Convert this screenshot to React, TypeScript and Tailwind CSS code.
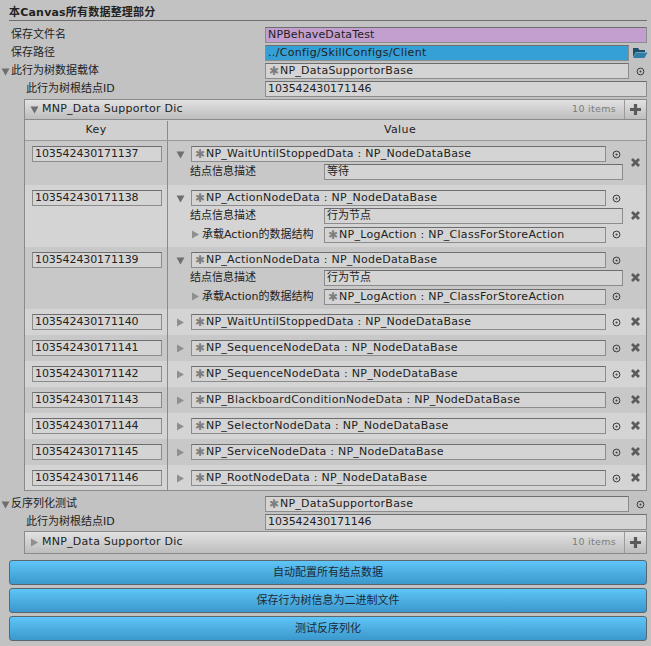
import React from "react";

const FONT = { fontFamily: '"DejaVu Sans", "Noto Sans CJK SC", sans-serif' };

function Circle({ className = "" }: { className?: string }) {
  return (
    <svg width="9" height="9" viewBox="0 0 9 9" className={`shrink-0 ${className}`}>
      <circle cx="4.5" cy="4.5" r="3.4" fill="none" stroke="#3a3a3a" strokeWidth="1" />
      <circle cx="4.5" cy="4.5" r="1" fill="#3a3a3a" />
    </svg>
  );
}

function Cross() {
  return (
    <svg width="11" height="11" viewBox="0 0 11 11">
      <path d="M2 2 L9 9 M9 2 L2 9" stroke="#5c5c5c" strokeWidth="2.8" />
    </svg>
  );
}

function Arrow({ open, light }: { open?: boolean; light?: boolean }) {
  const fill = light ? "#8f8f8f" : "#6f6f6f";
  return (
    <svg width="9" height="9" viewBox="0 0 9 9" className="shrink-0">
      {open ? <path d="M0.5 1.5 H8.5 L4.5 8.5 Z" fill={fill} /> : <path d="M1 0.5 V8.5 L8 4.5 Z" fill={fill} />}
    </svg>
  );
}

function Field({ text, star, className = "" }: { text: string; star?: boolean; className?: string }) {
  return (
    <div
      className={`flex h-[16px] shrink-0 items-center overflow-hidden whitespace-nowrap border border-[#8c8c8c] border-t-[#6e6e6e] pl-[2px] text-[11px] text-[#222222] ${className}`}
    >
      {star && <span className="w-[12px] shrink-0 text-center text-[12px] leading-none tracking-normal text-[#7d7d7d]">✱</span>}
      {text}
    </div>
  );
}

function PropRow({
  label,
  value,
  star,
  arrow,
  indent,
  picker,
}: {
  label: string;
  value: string;
  star?: boolean;
  arrow?: boolean;
  indent?: boolean;
  picker?: boolean;
}) {
  return (
    <div className="flex h-[18px] items-center">
      <div className={`flex w-[265px] shrink-0 items-center text-[11px] text-[#222222] ${indent ? "pl-[26px]" : "pl-[1px]"}`}>
        {arrow && <Arrow open />}
        <span className={arrow ? "ml-[1px]" : indent ? "" : "pl-[10px]"}>{label}</span>
      </div>
      <Field
        text={value}
        star={star}
        className={`bg-[#d4d4d4] ${picker ? "w-[364px]" : "w-[382px]"} ${star ? "tracking-[0.25px]" : "tracking-[-0.1px]"}`}
      />
      {picker && <Circle className="ml-[7px]" />}
    </div>
  );
}

function ListHeader({ open, className = "" }: { open?: boolean; className?: string }) {
  return (
    <div
      className={`ml-[24px] mr-[4px] flex items-center border border-[#8a8a8a] bg-gradient-to-b from-[#e2e2e2] to-[#bdbdbd] pl-[5px] text-[11px] tracking-[0.25px] text-[#222222] ${className}`}
    >
      <Arrow open={open} light={!open} />
      <span className="ml-[3px]">MNP_Data Supportor Dic</span>
      <span className="ml-auto text-[9.5px] tracking-[0.3px] text-[#7c7c7c]">10 items</span>
      <div className="ml-[8px] flex h-full w-[22px] items-center justify-center border-l border-[#9a9a9a]">
        <svg width="13" height="13" viewBox="0 0 13 13">
          <path d="M6.5 1 V12 M1 6.5 H12" stroke="#5a5a5a" strokeWidth="3.2" />
        </svg>
      </div>
    </div>
  );
}

function TableRow({ id, node, desc, h, dark }: { id: string; node: string; desc?: string; h: number; dark?: boolean }) {
  const open = h > 26;
  const hasAction = h > 44;
  return (
    <div className={`flex ${dark ? "bg-[#c8c8c8]" : "bg-[#d4d4d4]"}`} style={{ height: h }}>
      <div className="w-[143px] shrink-0 border-r border-[#8a8a8a] pl-[7px] pt-[5px]">
        <Field text={id} className="w-[130px] bg-[#d4d4d4] tracking-[-0.1px]" />
      </div>
      <div className={`flex flex-1 ${open ? "items-center" : "items-start"}`}>
        <div className="w-[456px] shrink-0 self-start pt-[5px]">
          <div className="flex items-center pl-[8px]">
            <Arrow open={open} light={!open} />
            <Field text={node} star className="ml-[6px] w-[415px] bg-[#d4d4d4] tracking-[0.25px]" />
            <Circle className="ml-[6px]" />
          </div>
          {open && (
            <div className="mt-[2px] flex items-center pl-[22px] text-[11px] text-[#222222]">
              <span className="w-[134px] shrink-0">结点信息描述</span>
              <Field text={desc ?? ""} className="w-[299px] bg-[#d4d4d4]" />
            </div>
          )}
          {hasAction && (
            <div className="mt-[2px] flex items-center pl-[23px] text-[11px] text-[#222222]">
              <Arrow light />
              <span className="ml-[2px] w-[122px] shrink-0">承载Action的数据结构</span>
              <Field text="NP_LogAction : NP_ClassForStoreAction" star className="w-[282px] bg-[#d4d4d4] tracking-[0.28px]" />
              <Circle className="ml-[6px]" />
            </div>
          )}
        </div>
        <div className={`flex flex-1 justify-center ${open ? "pb-[2px]" : "self-start pt-[7px]"}`}>
          <Cross />
        </div>
      </div>
    </div>
  );
}

const rows = [
  { id: "103542430171137", node: "NP_WaitUntilStoppedData : NP_NodeDataBase", desc: "等待", h: 44, dark: true },
  { id: "103542430171138", node: "NP_ActionNodeData : NP_NodeDataBase", desc: "行为节点", h: 62 },
  { id: "103542430171139", node: "NP_ActionNodeData : NP_NodeDataBase", desc: "行为节点", h: 62, dark: true },
  { id: "103542430171140", node: "NP_WaitUntilStoppedData : NP_NodeDataBase", h: 26 },
  { id: "103542430171141", node: "NP_SequenceNodeData : NP_NodeDataBase", h: 26, dark: true },
  { id: "103542430171142", node: "NP_SequenceNodeData : NP_NodeDataBase", h: 26 },
  { id: "103542430171143", node: "NP_BlackboardConditionNodeData : NP_NodeDataBase", h: 26, dark: true },
  { id: "103542430171144", node: "NP_SelectorNodeData : NP_NodeDataBase", h: 26 },
  { id: "103542430171145", node: "NP_ServiceNodeData : NP_NodeDataBase", h: 26, dark: true },
  { id: "103542430171146", node: "NP_RootNodeData : NP_NodeDataBase", h: 25 },
];

const buttons = ["自动配置所有结点数据", "保存行为树信息为二进制文件", "测试反序列化"];

export default function App() {
  return (
    <div className="h-[646px] w-[651px] overflow-hidden bg-[#c2c2c2]" style={FONT}>
      <div className="ml-[9px] mr-[4px] h-[21px] border-b border-[#6f6f6f] pt-[6px] text-[11px] font-bold leading-[14px] tracking-[0.2px] text-[#222222]">
        本Canvas所有数据整理部分
      </div>

      <div className="mt-[5px]">
        <div className="flex h-[18px] items-center">
          <div className="w-[265px] shrink-0 pl-[11px] text-[11px] text-[#222222]">保存文件名</div>
          <Field text="NPBehaveDataTest" className="w-[382px] bg-[#c29fcf] tracking-[0.15px]" />
        </div>
        <div className="flex h-[18px] items-center">
          <div className="w-[265px] shrink-0 pl-[11px] text-[11px] text-[#222222]">保存路径</div>
          <Field text="../Config/SkillConfigs/Client" className="w-[364px] bg-[#35a0d6] tracking-[0.34px]" />
          <svg width="16" height="12" viewBox="0 0 16 12" className="ml-[3px]">
            <path d="M1 1 H6 L7.5 3 H13 V5 H4 L1 10 Z" fill="#1f4f6e" />
            <path d="M4 5.5 H15.5 L12.5 11 H1 Z" fill="#2f7ea8" />
          </svg>
        </div>
        <PropRow label="此行为树数据载体" value="NP_DataSupportorBase" star arrow picker />
        <PropRow label="此行为树根结点ID" value="103542430171146" indent />
      </div>

      <ListHeader open className="mt-[1px] h-[21px]" />

      <div className="ml-[24px] mr-[4px] border-x border-b border-[#8a8a8a]">
        <div className="flex h-[21px] border-b border-[#9a9a9a] bg-[#d0d0d0] pt-[1px] text-[11px] tracking-[0.4px] text-[#222222]">
          <div className="flex w-[143px] shrink-0 items-center justify-center border-r border-[#8a8a8a]">Key</div>
          <div className="flex flex-1 items-center justify-center pr-[14px]">Value</div>
        </div>
        {rows.map((r) => (
          <TableRow key={r.id} {...r} />
        ))}
      </div>

      <div className="mt-[4px]">
        <PropRow label="反序列化测试" value="NP_DataSupportorBase" star arrow picker />
        <PropRow label="此行为树根结点ID" value="103542430171146" indent />
      </div>

      <ListHeader className="h-[23px]" />

      <div className="ml-[9px] mr-[4px] mt-[6px] flex flex-col gap-[3px]">
        {buttons.map((b) => (
          <div
            key={b}
            className="flex h-[25px] items-center justify-center rounded-[3px] border border-[#5a6670] bg-gradient-to-b from-[#5fc5f7] to-[#3b98cd] pt-[1px] text-[11px] text-[#1d2a33]"
          >
            {b}
          </div>
        ))}
      </div>
    </div>
  );
}
